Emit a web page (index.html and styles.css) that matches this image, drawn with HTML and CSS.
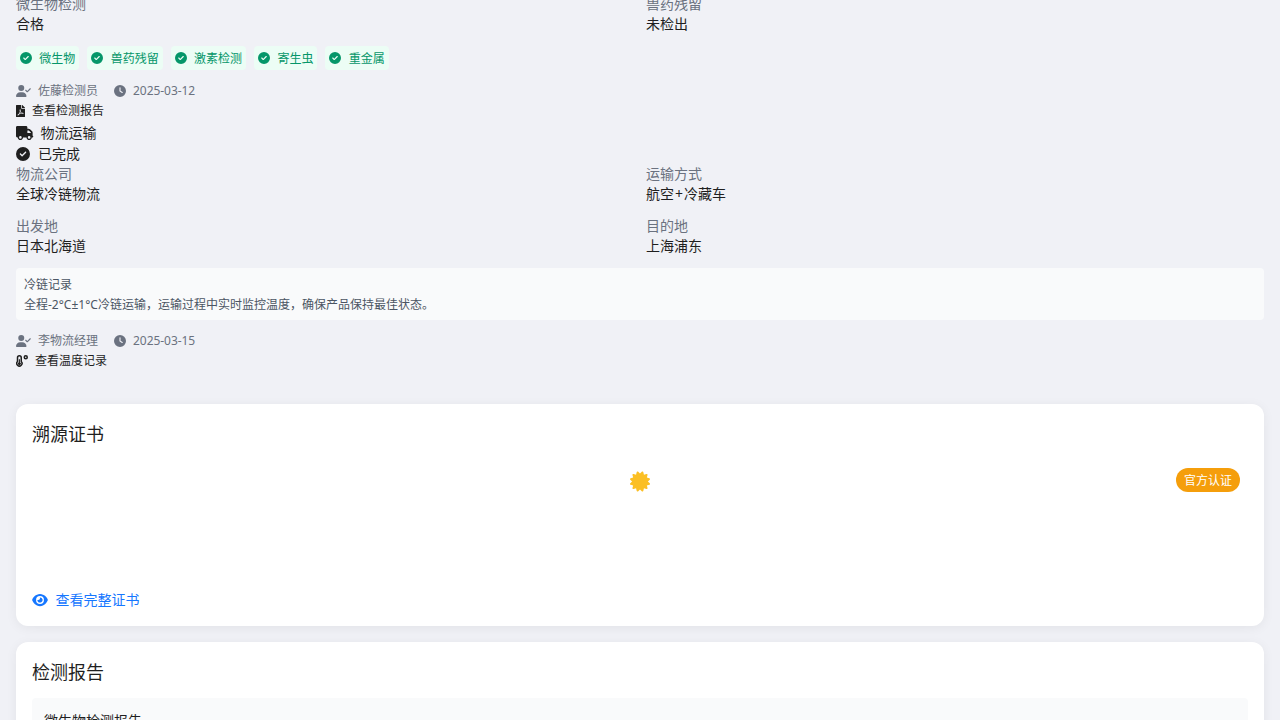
FILE: index.html
```html
<!DOCTYPE html>
<html lang="zh-CN">
<head>
<meta charset="utf-8">
<title>溯源信息</title>
<link rel="stylesheet" href="styles.css">
</head>
<body>
<svg class="sprite" aria-hidden="true">
<symbol id="check" viewBox="0 0 512 512"><path d="M256 512A256 256 0 1 0 256 0a256 256 0 1 0 0 512zM369 209L241 337c-9.4 9.4-24.6 9.4-33.9 0l-64-64c-9.4-9.4-9.4-24.6 0-33.9s24.6-9.4 33.9 0l47 47L335 175c9.4-9.4 24.6-9.4 33.9 0s9.4 24.6 0 33.9z"/></symbol>
<symbol id="clock" viewBox="0 0 512 512"><path d="M256 0a256 256 0 1 1 0 512A256 256 0 1 1 256 0zM232 120V256c0 8 4 15.5 10.7 20l96 64c11 7.4 25.9 4.4 33.3-6.7s4.4-25.9-6.7-33.3L280 243.2V120c0-13.3-10.7-24-24-24s-24 10.7-24 24z"/></symbol>
<symbol id="user" viewBox="0 0 640 512"><path d="M96 128a128 128 0 1 1 256 0A128 128 0 1 1 96 128zM0 482.3C0 383.8 79.8 304 178.3 304h91.4C368.2 304 448 383.8 448 482.3c0 16.4-13.3 29.7-29.7 29.7H29.7C13.3 512 0 498.7 0 482.3zM625 177L497 305c-9.4 9.4-24.6 9.4-33.9 0l-64-64c-9.4-9.4-9.4-24.6 0-33.9s24.6-9.4 33.9 0l47 47L591 143c9.4-9.4 24.6-9.4 33.9 0s9.4 24.6 0 33.9z"/></symbol>
<symbol id="truck" viewBox="0 0 640 512"><path d="M48 0C21.5 0 0 21.5 0 48V368c0 26.5 21.5 48 48 48H64c0 53 43 96 96 96s96-43 96-96H384c0 53 43 96 96 96s96-43 96-96h32c17.7 0 32-14.3 32-32s-14.3-32-32-32V237.3c0-17-6.7-33.3-18.7-45.3L512 114.7c-12-12-28.3-18.7-45.3-18.7H416V48c0-26.5-21.5-48-48-48H48zM416 160h50.7L544 237.3V256H416V160zM112 416a48 48 0 1 1 96 0 48 48 0 1 1 -96 0zm368-48a48 48 0 1 1 0 96 48 48 0 1 1 0-96z" fill-rule="evenodd"/></symbol>
<symbol id="eye" viewBox="0 0 576 512"><path d="M288 32c-80.8 0-145.5 36.8-192.6 80.6C48.6 156 17.3 208 2.5 243.7c-3.3 7.9-3.3 16.7 0 24.6C17.3 304 48.6 356 95.4 399.4C142.5 443.2 207.2 480 288 480s145.5-36.8 192.6-80.6c46.8-43.5 78.1-95.4 93-131.1c3.3-7.9 3.3-16.7 0-24.6c-14.9-35.7-46.2-87.7-93-131.1C433.5 68.8 368.8 32 288 32zM144 256a144 144 0 1 1 288 0 144 144 0 1 1 -288 0zm144-64c0 35.3-28.7 64-64 64c-7.1 0-13.9-1.2-20.3-3.3c-5.5-1.8-11.9 1.6-11.7 7.4c.3 6.9 1.3 13.8 3.2 20.7c13.7 51.2 66.4 81.6 117.6 67.9s81.6-66.4 67.9-117.6c-11.1-41.5-47.8-69.4-88.6-71.1c-5.8-.2-9.2 6.1-7.4 11.7c2.1 6.4 3.3 13.2 3.3 20.3z" fill-rule="evenodd"/></symbol>
<symbol id="pdf" viewBox="0 0 384 512"><path d="M181.9 256.1c-5-16-4.9-46.9-2-46.9 8.4 0 7.6 36.9 2 46.9zm-1.7 47.2c-7.7 20.2-17.3 43.3-28.4 62.7 18.3-7 39-17.2 62.9-21.9-12.7-9.6-24.9-23.4-34.5-40.8zM86.1 428.1c0 .8 13.2-5.4 34.9-40.2-6.7 6.3-29.1 24.5-34.9 40.2zM248 160h136v328c0 13.3-10.7 24-24 24H24c-13.3 0-24-10.7-24-24V24C0 10.7 10.7 0 24 0h200v136c0 13.2 10.8 24 24 24zm-8 171.8c-20-12.2-33.3-29-42.7-53.8 4.5-18.5 11.6-46.6 6.2-64.2-4.7-29.4-42.4-26.5-47.8-6.8-5 18.3-.4 44.1 8.1 77-11.6 27.6-28.7 64.6-40.8 85.8-.1 0-.1.1-.2.1-27.1 13.9-73.6 44.5-54.5 68 5.6 6.9 16 10 21.5 10 17.9 0 35.7-18 61.1-61.8 25.8-8.5 54.1-19.1 79-23.2 21.7 11.8 47.1 19.5 64 19.5 29.2 0 31.2-32 19.7-43.4-13.9-13.6-54.3-9.7-73.6-7.2zM377 105L279 7c-4.5-4.5-10.6-7-17-7h-6v128h128v-6.1c0-6.3-2.5-12.4-7-16.9zm-74.1 255.3c4.1-2.7-2.5-11.9-42.8-9 37.1 15.8 42.8 9 42.8 9z"/></symbol>
<symbol id="temp" viewBox="0 0 512 512"><g fill="none" stroke="currentColor" stroke-width="64"><path d="M64 112a80 80 0 0 1 160 0v166a112 112 0 1 1-160 0z"/><circle cx="416" cy="96" r="64"/></g><path d="M120 180h48v125a64 64 0 1 1-48 0z"/></symbol>
<symbol id="seal" viewBox="0 0 512 512"><path d="M211 7.3C205 1 196-1.4 187.6.8s-14.9 8.9-17.1 17.3L154.7 80.6l-62-17.5c-8.4-2.4-17.4 0-23.5 6.1s-8.5 15.1-6.1 23.5l17.5 62L18.1 170.6c-8.4 2.1-15 8.7-17.3 17.1S1 205 7.3 211l46.2 45L7.3 301C1 307-1.4 316 .8 324.4s8.9 14.9 17.3 17.1l62.5 15.8-17.5 62c-2.4 8.4 0 17.4 6.1 23.5s15.1 8.5 23.5 6.1l62-17.5 15.8 62.5c2.1 8.4 8.7 15 17.1 17.3s17.3-.2 23.4-6.4l45-46.2 45 46.2c6.1 6.2 15 8.7 23.4 6.4s14.9-8.9 17.1-17.3l15.8-62.5 62 17.5c8.4 2.4 17.4 0 23.5-6.1s8.5-15.1 6.1-23.5l-17.5-62 62.5-15.8c8.4-2.1 15-8.7 17.3-17.1s-.2-17.4-6.4-23.4l-46.2-45 46.2-45c6.2-6.1 8.7-15 6.4-23.4s-8.9-14.9-17.3-17.1l-62.5-15.8 17.5-62c2.4-8.4 0-17.4-6.1-23.5s-15.1-8.5-23.5-6.1l-62 17.5L341.4 18.1c-2.1-8.4-8.7-15-17.1-17.3S307 1 301 7.3L256 53.5 211 7.3z"/></symbol>
</svg>
<main class="page">
  <section class="timeline">
    <div class="facts">
      <div><div class="label">微生物检测</div><div>合格</div></div>
      <div><div class="label">兽药残留</div><div>未检出</div></div>
    </div>
    <div class="tags">
      <span class="tag"><svg class="i12"><use href="#check"/></svg><span>微生物</span></span>
      <span class="tag"><svg class="i12"><use href="#check"/></svg><span>兽药残留</span></span>
      <span class="tag"><svg class="i12"><use href="#check"/></svg><span>激素检测</span></span>
      <span class="tag"><svg class="i12"><use href="#check"/></svg><span>寄生虫</span></span>
      <span class="tag"><svg class="i12"><use href="#check"/></svg><span>重金属</span></span>
    </div>
    <div class="meta"><span class="by"><svg class="i-user"><use href="#user"/></svg>佐藤检测员</span><span class="when"><svg class="i12"><use href="#clock"/></svg>2025-03-12</span></div>
    <div class="link"><svg class="i-pdf"><use href="#pdf"/></svg>查看检测报告</div>
    <div class="stage"><svg class="i-truck"><use href="#truck"/></svg>物流运输</div>
    <div class="status"><svg class="i14"><use href="#check"/></svg>已完成</div>
    <div class="facts">
      <div><div class="label">物流公司</div><div>全球冷链物流</div></div>
      <div><div class="label">运输方式</div><div>航空<span class="plus">+</span>冷藏车</div></div>
      <div><div class="label">出发地</div><div>日本北海道</div></div>
      <div><div class="label">目的地</div><div>上海浦东</div></div>
    </div>
    <div class="note"><div>冷链记录</div><div>全程-2°C±1°C冷链运输，运输过程中实时监控温度，确保产品保持最佳状态。</div></div>
    <div class="meta"><span class="by"><svg class="i-user"><use href="#user"/></svg>李物流经理</span><span class="when"><svg class="i12"><use href="#clock"/></svg>2025-03-15</span></div>
    <div class="link"><svg class="i12"><use href="#temp"/></svg>查看温度记录</div>
  </section>
  <section class="card">
    <h2>溯源证书</h2>
    <div class="cert"><svg class="i-seal"><use href="#seal"/></svg><span class="badge">官方认证</span></div>
    <a class="view"><svg class="i-eye"><use href="#eye"/></svg>查看完整证书</a>
  </section>
  <section class="card">
    <h2>检测报告</h2>
    <div class="report">微生物检测报告</div>
  </section>
</main>
</body>
</html>
```
FILE: styles.css
```css
* { box-sizing: border-box; }
body { margin: 0; height: 720px; overflow: hidden; background: #f0f1f6; color: #1f1f1f; font: 14px/20px "Noto Sans", "Noto Sans CJK SC", sans-serif; }
svg { fill: currentColor; flex: none; display: block; }
.sprite { display: none; }
.page { padding: 0 16px; height: 720px; overflow: hidden; }
.timeline { margin-top: -6px; height: 410px; }
.facts { display: grid; grid-template-columns: 1fr 1fr; gap: 12px; }
.label { color: #6b7280; }
.plus { padding: 0 1px; }
.tags { display: flex; gap: 8px; margin: 12px 0 11px; }
.tag { display: flex; align-items: center; gap: 7.35px; height: 24px; padding: 0 4px; border-radius: 4px; background: #ecfdf5; color: #059669; font-size: 12px; }
.tag span { padding-top: 2px; }
.meta { display: flex; gap: 16px; height: 20px; font-size: 12px; color: #6b7280; }
.by, .when, .link, .stage, .status, .view { display: flex; align-items: center; gap: 7px; }
.when { letter-spacing: -.05px; }
.link { height: 20px; font-size: 12px; }
.stage { height: 23px; }
.status { height: 20px; gap: 8px; }
.note { margin: 12px 0 11px; padding: 7px 8px; height: 52px; border-radius: 4px; background: #f9fafb; color: #4b5563; font-size: 12px; }
.card { margin-bottom: 16px; padding: 16px; height: 222px; border-radius: 12px; background: #fff; box-shadow: 0 2px 12px rgba(0, 0, 0, .06); }
h2 { margin: 0 0 12px; padding-top: 1px; font-size: 18px; line-height: 27px; font-weight: 400; }
.cert { position: relative; display: flex; justify-content: center; height: 130px; padding-top: 15px; color: #fbbf24; }
.cert { padding-top: 15px; }
.badge { position: absolute; top: 12px; right: 8px; height: 24px; padding: 0 8px; border-radius: 12px; background: #f59e0b; color: #fff; font-size: 12px; line-height: 26px; }
.cert { padding-top: 15px; margin-top: -4px; height: 134px; }
.view { height: 20px; gap: 7.5px; color: #1677ff; }
.report { height: 80px; padding: 13px 12px; border-radius: 4px; background: #f9fafb; }
.i12 { width: 12px; height: 12px; }
.i14 { width: 14px; height: 14px; }
.i-user { width: 15px; height: 12px; }
.i-pdf { width: 9px; height: 12px; }
.i-truck { width: 17.5px; height: 14px; }
.i-seal { width: 20px; height: 21px; }
.i-eye { width: 16px; height: 14px; }
```
